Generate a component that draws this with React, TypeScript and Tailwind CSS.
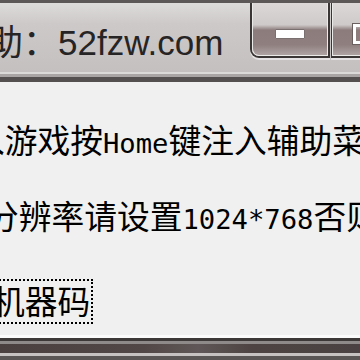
import { FC } from "react";

const cjk = "font-['Noto_Sans_CJK_SC','Noto_Sans',sans-serif]";
const mono = "font-['DejaVu_Sans_Mono',monospace] text-[27.2px]";

const CaptionButtons: FC = () => {
  return (
    <div className="flex shrink-0 h-[56px]">
      {/* minimize */}
      <div className="w-[80px] h-[55px] border-2 border-t-0 border-[#3a3636] rounded-bl-[9px] shadow-[0_2px_0_#e4e2e2]">
        <div className="h-full border border-t-0 border-[#ece9e9] rounded-bl-[7px] bg-[linear-gradient(to_bottom,#dcd8d8_0%,#cfcaca_42%,#8d7c7c_52%,#8f7f7f_80%,#aea3a3_100%)] flex items-start justify-center pt-[26px]">
          <div className="w-[30px] h-[10px] bg-white border border-[#7a7070] rounded-[1px]" />
        </div>
      </div>
      {/* maximize */}
      <div className="ml-[1px] w-[80px] h-[55px] border-2 border-t-0 border-l-[1px] border-[#3a3636] shadow-[0_2px_0_#e4e2e2]">
        <div className="h-full border border-t-0 border-[#ece9e9] bg-[linear-gradient(to_bottom,#dcd8d8_0%,#cfcaca_42%,#8d7c7c_52%,#8f7f7f_80%,#aea3a3_100%)] flex items-start pl-[20px] pt-[21px]">
          <div className="w-[26px] h-[20px] border-[3px] border-white outline outline-1 outline-[#6a6060]" />
        </div>
      </div>
    </div>
  );
};

const App: FC = () => {
  return (
    <div className="w-[360px] h-[360px] overflow-hidden bg-[#f0f0f0] flex flex-col">
      {/* title bar */}
      <div className="h-[3px] bg-[#5c5858] shrink-0" />
      <div className="h-[69px] shrink-0 flex bg-[linear-gradient(to_bottom,#dedbdb_0%,#cdc9c9_30%,#c4c0c0_100%)]">
        <div className="w-[250px] shrink-0 pt-[17px]">
          <div className="ml-[-12px] whitespace-nowrap text-[35px] leading-[40px] text-[#262424] font-['Liberation_Sans','Noto_Sans_CJK_SC',sans-serif]">
            <span className={cjk}>助：</span>52fzw.com
          </div>
        </div>
        <CaptionButtons />
      </div>
      <div className="h-[2px] bg-[#dcd9d9] shrink-0" />
      <div className="h-[3px] bg-[#a9a5a5] shrink-0" />
      <div className="h-[5px] bg-[#545050] shrink-0" />

      {/* content */}
      <div className={`flex-1 flex flex-col text-black text-[32.75px] leading-[32px] ${cjk}`}>
        <div className="mt-[41px] ml-[-28px] whitespace-nowrap">
          入游戏按<span className={mono}>Home</span>键注入辅助菜单
        </div>
        <div className="mt-[39px] ml-[-14px] whitespace-nowrap">
          分辨率请设置<span className={mono}>1024*768</span>否则
        </div>
        <div className="mt-[43px] flex">
          <div className="ml-[-40px] pl-[30px] pr-[1px] pt-[3px] h-[45px] border-2 border-dotted border-black whitespace-nowrap">
            机器码
          </div>
        </div>
      </div>

      {/* bottom frame */}
      <div className="h-[3px] bg-[#fbfbfb] shrink-0" />
      <div className="h-[3px] bg-[#3c3838] shrink-0" />
      <div className="h-[3px] bg-[#8e8a8a] shrink-0" />
      <div className="h-[9px] bg-[linear-gradient(to_right,#4a4040_0%,#524747_40%,#5f5757_55%,#4d4343_70%,#4a4242_100%)] shrink-0" />
      <div className="h-[3px] bg-[#c6c2c2] shrink-0" />
      <div className="h-[4px] bg-[#5a5656] shrink-0" />
    </div>
  );
};

export default App;
